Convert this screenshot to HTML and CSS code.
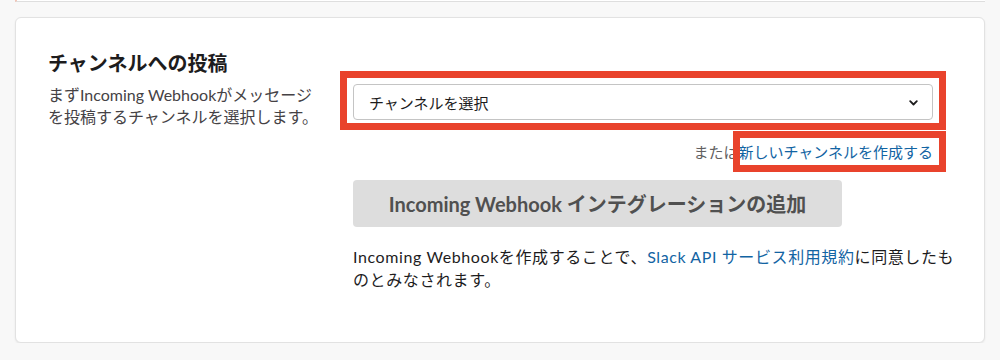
FILE: index.html
```html
<!DOCTYPE html>
<html lang="ja">
<head>
    <meta charset="UTF-8">
    <meta name="viewport" content="width=device-width, initial-scale=1.0">
    <title>Incoming Webhook</title>
    <link rel="stylesheet" href="styles.css">
</head>
<body>
    <div class="prev-card"></div>

    <div class="card">
        <div class="section">
            <div class="section-info">
                <h2>チャンネルへの投稿</h2>
                <p>まずIncoming Webhookがメッセージを投稿するチャンネルを選択します。</p>
            </div>

            <div class="section-body">
                <div class="channel-select">
                    <span>チャンネルを選択</span>
                    <svg class="chevron" width="9" height="6" viewBox="0 0 9 6">
                        <path d="M1.2 1.2 L4.5 4.5 L7.8 1.2" fill="none" stroke="#1d1c1d" stroke-width="1.8" stroke-linecap="round" stroke-linejoin="round"/>
                    </svg>
                </div>

                <div class="create-row">
                    または<a href="#">新しいチャンネルを作成する</a>
                </div>

                <button class="btn-add" disabled>Incoming Webhook インテグレーションの追加</button>

                <p class="terms">
                    Incoming Webhookを作成することで、<a href="#">Slack API サービス利用規約</a>に同意したものとみなされます。
                </p>
            </div>
        </div>

        <!-- annotation boxes -->
        <div class="mark mark-select"></div>
        <div class="mark mark-link"></div>
    </div>
</body>
</html>
```

FILE: styles.css
```css
* {
    margin: 0;
    padding: 0;
    box-sizing: border-box;
}

body {
    font-family: Lato, 'Noto Sans CJK JP', sans-serif;
    background: #f8f8f8;
    color: #1d1c1d;
    padding: 0 15px;
}

.prev-card {
    height: 2px;
    background: #fff;
    border-bottom: 1px solid #dedede;
    border-left: 2px solid #f2c6b8;
    margin-bottom: 15px;
}

.card {
    position: relative;
    background: #fff;
    border: 1px solid #e2e2e2;
    border-radius: 6px;
    box-shadow: 0 1px 2px rgba(0, 0, 0, 0.08);
    height: 326px;
    padding: 31px 20px 0 32px;
}

.section {
    display: grid;
    grid-template-columns: 305px 610px;
}

.section-info h2 {
    font-size: 20px;
    font-weight: 700;
    line-height: 28px;
    color: #1d1c1d;
    margin-bottom: 7px;
}

.section-info p {
    width: 270px;
    font-size: 16px;
    line-height: 22px;
    color: #454245;
}

.section-body {
    padding-top: 35px;
}

.channel-select {
    width: 580px;
    height: 36px;
    border: 1px solid #c4c4c4;
    border-radius: 4px;
    display: flex;
    align-items: center;
    justify-content: space-between;
    padding: 0 14px 0 15px;
    font-size: 15px;
}

.chevron {
    margin-top: 1px;
}

.create-row {
    width: 580px;
    text-align: right;
    font-size: 15px;
    line-height: 22px;
    color: #616061;
    margin-top: 21px;
}

a {
    color: #1264a3;
    text-decoration: none;
}

.btn-add {
    display: block;
    width: 489px;
    height: 47px;
    margin-top: 17px;
    border: none;
    border-radius: 4px;
    background: #dddddd;
    color: #505050;
    font-family: Lato, 'Noto Sans CJK JP', sans-serif;
    font-size: 20px;
    font-weight: 700;
}

.terms {
    margin-top: 18px;
    font-size: 16px;
    line-height: 23px;
    letter-spacing: 0.6px;
    color: #1d1c1d;
}

.mark {
    position: absolute;
    border: 7px solid #e9432c;
}

.mark-select {
    left: 324px;
    top: 53px;
    width: 606px;
    height: 59px;
}

.mark-link {
    left: 717px;
    top: 113px;
    width: 213px;
    height: 41px;
}
```
